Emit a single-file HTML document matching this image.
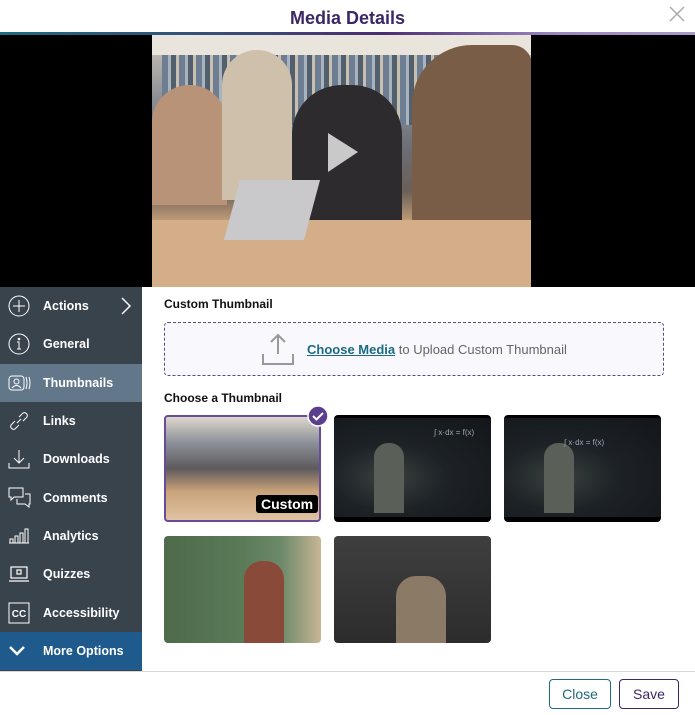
<!DOCTYPE html>
<html><head><meta charset="utf-8"><style>
*{box-sizing:border-box;margin:0;padding:0}
body{width:695px;height:715px;background:#fff;font-family:"Liberation Sans",sans-serif;position:relative;overflow:hidden}
.hdr{position:absolute;top:0;left:0;width:695px;height:33px;text-align:center;font-weight:bold;font-size:18px;color:#3b2766;line-height:37px}
.x{position:absolute;right:10px;top:6px}
.bar{position:absolute;top:32px;left:0;width:695px;height:3px;background:linear-gradient(90deg,#1f6a7e 0%,#3a4a78 35%,#4b2d72 55%,#9b86be 80%,#a99ac6 100%)}
.video{position:absolute;top:35px;left:0;width:695px;height:252px;background:#000}
.photo{position:absolute;left:152px;top:0;width:379px;height:252px;overflow:hidden;
background:linear-gradient(180deg,#cfc8bd 0%,#8c8f94 25%,#6b6e74 45%,#6b5f58 62%,#c9a27a 75%,#d8b38b 100%)}
.side{position:absolute;left:0;top:287px;width:142px;height:384px;background:#39434c}
.it{height:38.3px;display:flex;align-items:center;color:#fff;font-size:12.5px;font-weight:bold;position:relative}
.it svg{position:absolute;left:8px}
.it span{position:absolute;left:43px}
.sel{background:#62788a}
.more{background:#1f5a8c}
.h{position:absolute;font-size:12px;font-weight:bold;color:#111}
.drop{position:absolute;left:164px;top:322px;width:500px;height:54px;border:1px dashed #5b4a86;border-radius:4px;background:#f8f8fd}
.drop .t{position:absolute;left:142px;top:19px;font-size:13px;color:#666}
.drop a{color:#1c6b82;font-weight:bold;text-decoration:underline}
.th{position:absolute;width:157px;height:107px;border-radius:4px;overflow:hidden}
.dark{background:radial-gradient(ellipse at 35% 60%,#3a423f 0%,#1d2226 40%,#12161a 100%);border-top:3px solid #000;border-bottom:5px solid #000}
.btn{position:absolute;top:679px;height:30px;border-radius:4px;font-size:14px;text-align:center;line-height:28px;background:#fff}
</style></head><body>
<div class="hdr">Media Details</div>
<svg class="x" width="16" height="16" viewBox="0 0 16 16"><path d="M1 1L15 15M15 1L1 15" stroke="#aaa" stroke-width="1.5"/></svg>
<div class="bar"></div>
<div class="video"><div class="photo">
<div style="position:absolute;left:0;top:0;width:379px;height:20px;background:#e9e4dc"></div>
<div style="position:absolute;left:10px;top:20px;width:360px;height:70px;background:repeating-linear-gradient(90deg,#6d7e92 0 6px,#a9b3bd 6px 9px,#52606e 9px 14px,#c7c0b0 14px 17px)"></div>
<div style="position:absolute;left:0;top:50px;width:75px;height:120px;background:#b89378;border-radius:40px 40px 0 0"></div>
<div style="position:absolute;left:70px;top:15px;width:70px;height:150px;background:#cfc0ab;border-radius:35px 35px 0 0"></div>
<div style="position:absolute;left:140px;top:50px;width:110px;height:140px;background:#2d2b2d;border-radius:50px 50px 0 0"></div>
<div style="position:absolute;left:260px;top:10px;width:120px;height:200px;background:#7a5d47;border-radius:60px 20px 0 0"></div>
<div style="position:absolute;left:0;top:185px;width:379px;height:67px;background:#d3ae88"></div>
<div style="position:absolute;left:80px;top:145px;width:80px;height:60px;background:#c9c9cc;transform:skewX(-15deg)"></div>
<svg style="position:absolute;left:170px;top:95px" width="40" height="45"><path d="M6 3L36 22L6 42Z" fill="rgba(255,255,255,.75)"/></svg>
</div></div>
<div class="side">
<div class="it"><svg width="22" height="22" viewBox="0 0 22 22" fill="none" stroke="#fff" stroke-width="1"><circle cx="11" cy="11" r="10"/><path d="M11 5V17M5 11H17"/></svg><span>Actions</span><svg style="left:120px" width="12" height="18" viewBox="0 0 12 18"><path d="M2 1L10 9L2 17" stroke="#fff" stroke-width="1.5" fill="none"/></svg></div>
<div class="it"><svg width="22" height="22" viewBox="0 0 22 22" fill="none" stroke="#fff" stroke-width="1"><circle cx="11" cy="11" r="10"/><path d="M9 9H11V16M9 16H13"/><circle cx="11" cy="6" r=".8"/></svg><span>General</span></div>
<div class="it sel"><svg width="24" height="18" viewBox="0 0 24 18" fill="none" stroke="#fff" stroke-width="1"><rect x="1" y="2" width="15" height="14" rx="3"/><circle cx="8.5" cy="7.5" r="2.5"/><path d="M4 14Q8.5 9 13 14M18 3Q20 9 18 15M21 3Q23 9 21 15"/></svg><span>Thumbnails</span></div>
<div class="it"><svg width="22" height="22" viewBox="0 0 22 22" fill="none" stroke="#fff" stroke-width="1"><path d="M9 13L13 9M7 11L3 15A3 3 0 0 0 7 19L11 15M15 11L19 7A3 3 0 0 0 15 3L11 7"/></svg><span>Links</span></div>
<div class="it"><svg width="22" height="22" viewBox="0 0 22 22" fill="none" stroke="#fff" stroke-width="1"><path d="M11 2V15M6 10L11 15L16 10M1 15V20H21V15"/></svg><span>Downloads</span></div>
<div class="it"><svg width="24" height="22" viewBox="0 0 24 22" fill="none" stroke="#fff" stroke-width="1"><path d="M1 1H15V10H6L3 13V10H1ZM9 12V17H17L21 20V17H22V7H17"/></svg><span>Comments</span></div>
<div class="it"><svg width="22" height="18" viewBox="0 0 22 18" fill="none" stroke="#fff" stroke-width="1"><path d="M1 16H21M2 16V12H5V16M7 16V9H10V16M12 16V6H15V16M17 16V2H20V16"/></svg><span>Analytics</span></div>
<div class="it"><svg width="22" height="20" viewBox="0 0 22 20" fill="none" stroke="#fff" stroke-width="1.2"><rect x="3" y="3" width="16" height="11"/><rect x="9" y="6" width="4" height="4"/><path d="M1 17H21"/></svg><span>Quizzes</span></div>
<div class="it"><svg width="22" height="22" viewBox="0 0 22 22"><rect x="1" y="1" width="20" height="20" fill="none" stroke="#fff" stroke-width="1"/><text x="11" y="15" font-size="10" fill="#fff" text-anchor="middle" font-family="Liberation Sans">CC</text></svg><span>Accessibility</span></div>
<div class="it more"><svg width="18" height="12" viewBox="0 0 18 12"><path d="M2 2L9 9L16 2" stroke="#fff" stroke-width="2.5" fill="none"/></svg><span>More Options</span></div>
</div>
<div class="h" style="left:164px;top:297px">Custom Thumbnail</div>
<div class="drop">
<svg style="position:absolute;left:96px;top:9px" width="34" height="34" viewBox="0 0 34 34" fill="none" stroke="#999" stroke-width="2"><path d="M17 3V22M10 10L17 3L24 10M2 22V32H32V22"/></svg>
<div class="t"><a>Choose Media</a> to Upload Custom Thumbnail</div></div>
<div class="h" style="left:164px;top:391px">Choose a Thumbnail</div>
<div class="th" style="left:164px;top:415px;border:2px solid #6a4a9a;background:linear-gradient(180deg,#ddd6cc 0%,#8c9099 25%,#5d5a5c 50%,#c9a27a 72%,#dfc3a1 100%)">
<div style="position:absolute;left:90px;top:78px;background:#000;color:#fff;font-size:14px;font-weight:bold;padding:1px 5px;border-radius:3px">Custom</div></div>
<svg style="position:absolute;left:307px;top:405px" width="22" height="22"><circle cx="11" cy="11" r="10" fill="#5b3f8c" stroke="#fff" stroke-width="1.5"/><path d="M6 11L9.5 14.5L16 8" stroke="#fff" stroke-width="2" fill="none"/></svg>
<div class="th dark" style="left:334px;top:415px"><div style="position:absolute;left:40px;top:25px;width:30px;height:70px;background:#5a5f58;border-radius:14px 14px 0 0"></div><div style="position:absolute;left:100px;top:10px;color:#9ab;font-size:8px">∫ x·dx = f(x)</div></div>
<div class="th dark" style="left:504px;top:415px"><div style="position:absolute;left:40px;top:25px;width:30px;height:70px;background:#5a5f58;border-radius:14px 14px 0 0"></div><div style="position:absolute;left:60px;top:20px;color:#9ab;font-size:8px">∫ x·dx = f(x)</div></div>
<div class="th" style="left:164px;top:536px;background:linear-gradient(90deg,#4e6b4c 0%,#5a7a58 50%,#6d8a6a 75%,#c8b696 100%)"><div style="position:absolute;left:80px;top:25px;width:40px;height:82px;background:#8a4a3a;border-radius:18px 18px 0 0"></div></div>
<div class="th" style="left:334px;top:536px;background:linear-gradient(180deg,#3f3f3f,#2c2c2c)"><div style="position:absolute;left:62px;top:40px;width:50px;height:67px;background:#8a7a66;border-radius:20px 20px 0 0"></div></div>
<div style="position:absolute;left:0;top:671px;width:695px;height:1px;background:#d8d8d8"></div>
<div class="btn" style="left:549px;width:62px;border:1px solid #1f6a7e;color:#1f6a7e">Close</div>
<div class="btn" style="left:619px;width:60px;border:1px solid #3b2766;color:#3b2766">Save</div>
</body></html>
